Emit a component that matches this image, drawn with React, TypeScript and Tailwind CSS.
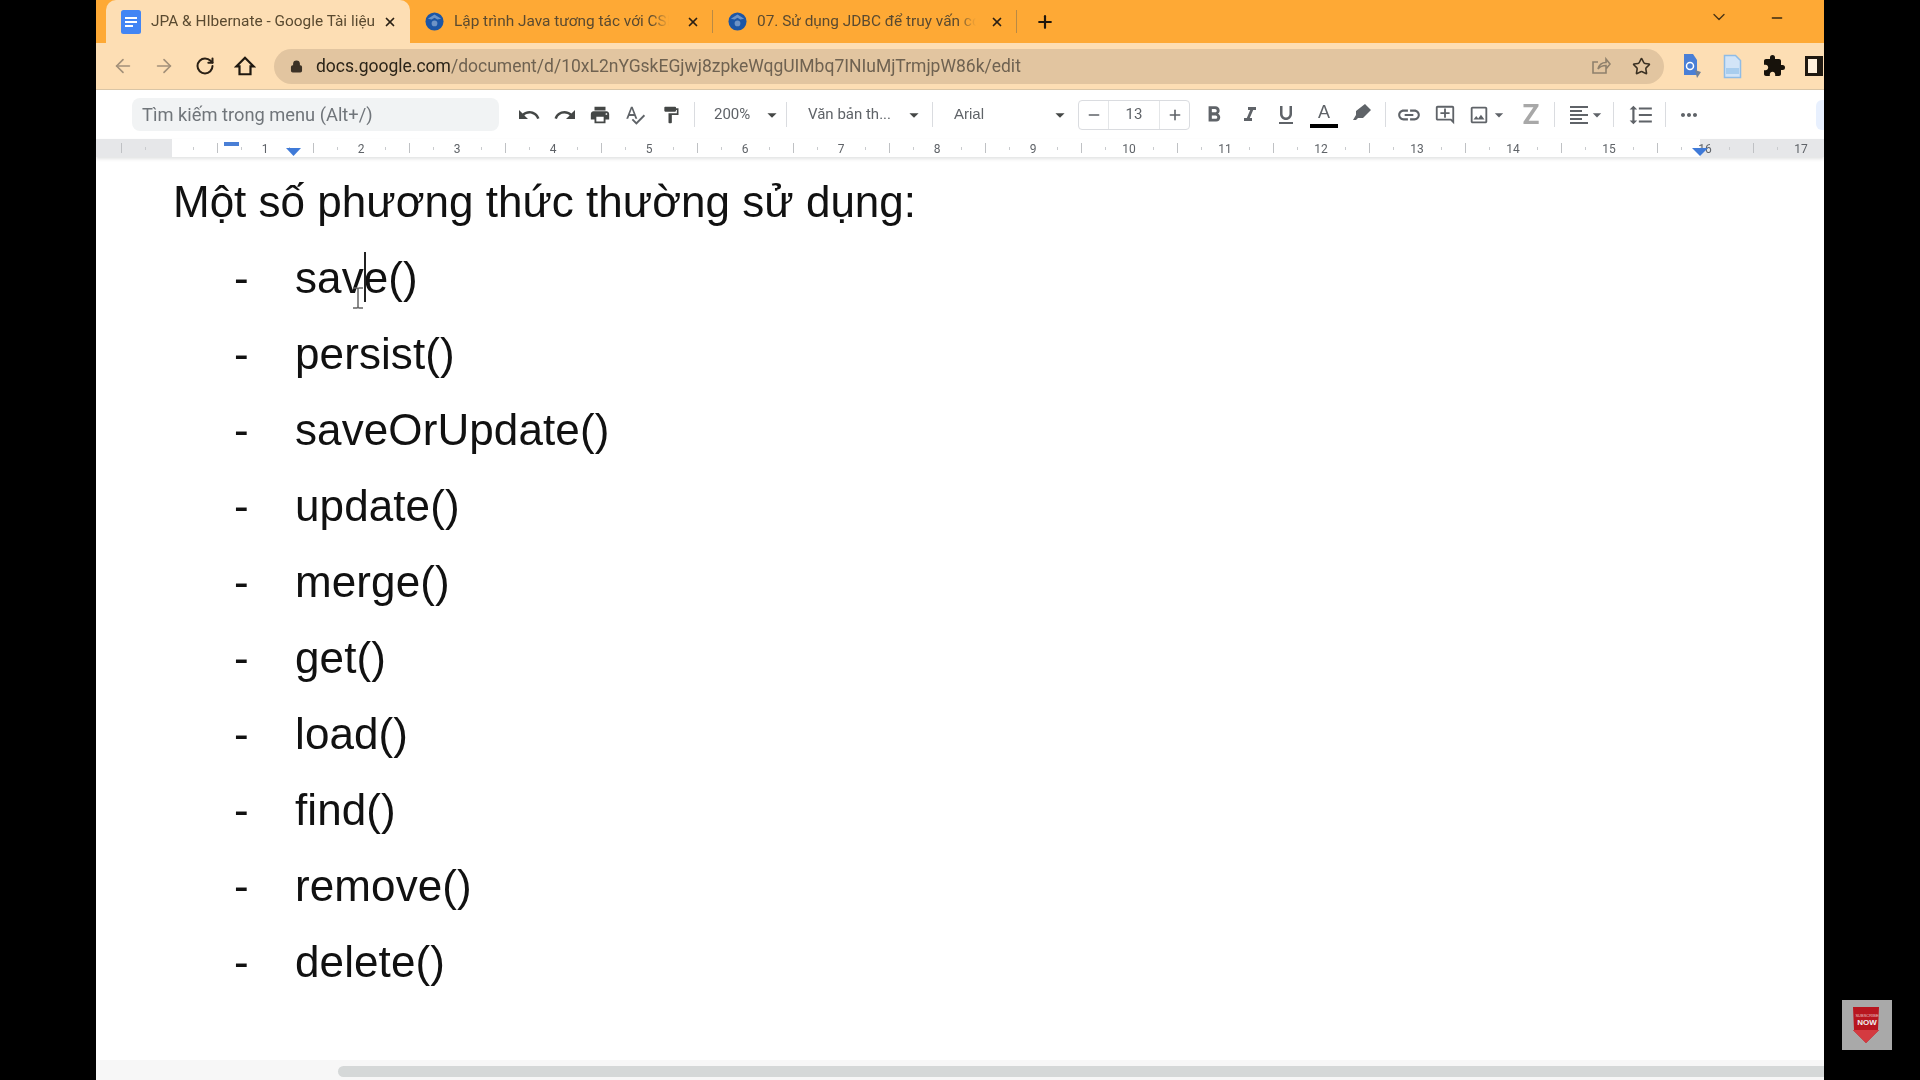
import React from 'react';
import { ArrowLeft, ArrowRight, RotateCw, Lock, Star, Plus, X, ChevronDown, Minus } from 'lucide-react';
import {
  MdUndo,
  MdRedo,
  MdPrint,
  MdSpellcheck,
  MdFormatPaint,
  MdArrowDropDown,
  MdFormatBold,
  MdFormatItalic,
  MdFormatUnderlined,
  MdLink,
  MdOutlineAddComment,
  MdOutlineImage,
  MdFormatAlignLeft,
  MdFormatLineSpacing,
  MdMoreHoriz,
  MdExtension,
} from 'react-icons/md';

const methods = ['persist()', 'saveOrUpdate()', 'update()', 'merge()', 'get()', 'load()', 'find()', 'remove()', 'delete()'];

const Globe = () => (
  <svg width="19" height="19" viewBox="0 0 20 20" className="shrink-0">
    <circle cx="10" cy="10" r="9.5" fill="#1c56a6" />
    <path d="M3 7 L10 2.5 L17 7 L13 8 L10 6 L7 8 Z" fill="#6d93c6" />
    <circle cx="10" cy="12" r="3" fill="#6d93c6" />
  </svg>
);

const DocsIcon = () => (
  <svg width="20" height="24" viewBox="0 0 20 24" className="shrink-0">
    <rect width="20" height="24" rx="2.5" fill="#4285f4" />
    <path d="M4 7h12v2H4zM4 11h12v2H4zM4 15h8v2H4z" fill="#fff" />
  </svg>
);

const Tab = ({ title, active, children, width, textWidth, sep }: { title: string; active?: boolean; children: React.ReactNode; width: string; textWidth: string; sep?: boolean }) => (
  <div className={`${width} h-[43px] flex items-center relative shrink-0 ${active ? 'bg-[#fddeb4] rounded-t-[10px]' : ''}`}>
    {children}
    <span className={`${textWidth} relative ml-[10px] text-[15.4px] text-[#5a4a30] whitespace-nowrap overflow-hidden shrink-0 font-['Roboto',sans-serif]`}>
      {title}
      {!active && <span className="absolute right-0 top-0 bottom-0 w-[18px] bg-gradient-to-r from-transparent to-[#fea935]" />}
    </span>
    <X size={14} strokeWidth={3} className="text-[#2a2015] ml-auto mr-[13px] shrink-0" />
    {sep && <div className="absolute right-0 top-[10px] w-px h-[23px] bg-[#b98a45]" />}
  </div>
);

const Sep = ({ className }: { className: string }) => <div className={`w-px h-[25px] bg-[#dadce0] shrink-0 ${className}`} />;

const Ruler = () => {
  const ticks = Array.from({ length: 72 }, (_, i) => i);
  return (
    <svg width="1728" height="18" className="block">
      <rect width="1728" height="18" fill="#ffffff" />
      <rect width="76" height="18" fill="#e6e7e9" />
      <rect x="1604" width="124" height="18" fill="#e6e7e9" />
      {ticks.map((i) => {
        const x = 25 + i * 24;
        if (i % 4 === 2) {
          return null;
        }
        if (i % 4 === 0) {
          return <rect key={i} x={x} y="4" width="1" height="10" fill="#bfc1c4" />;
        }
        return <rect key={i} x={x} y="8" width="1" height="3" fill="#c9cbce" />;
      })}
      {Array.from({ length: 17 }, (_, i) => (
        <text key={i} x={169 + i * 96} y="14" textAnchor="middle" fontSize="12" fontFamily="Roboto, sans-serif" fill="#5f6368">
          {i + 1}
        </text>
      ))}
      <rect x="128" y="3" width="15" height="4" fill="#4a7fd6" />
      <path d="M190 9h15l-7.5 8z" fill="#3f7ad8" />
      <path d="M1596 9h16l-8 8z" fill="#3f7ad8" />
    </svg>
  );
};

const Badge = () => (
  <div className="absolute left-[1842px] top-[1000px] w-[50px] h-[50px] bg-[#a9a9a9] flex flex-col items-center">
    <svg width="26" height="36" viewBox="0 0 26 36" className="absolute left-[11px] top-[7px]">
      <path d="M0 0h26l-1 23h1L13 36 0 23h1z" fill="#b8161f" />
      <path d="M0 23h26L13 36z" fill="#d43a40" />
    </svg>
    <span className="relative mt-[14px] text-[4px] leading-[4px] text-[#e8c8c8]">SUBSCRIBE</span>
    <span className="relative text-[8px] leading-[9px] font-bold text-[#eee]">NOW</span>
  </div>
);

export default function App() {
  return (
    <div className="w-[1920px] h-[1080px] bg-black relative overflow-hidden font-['Liberation_Sans',sans-serif]">
      <div className="ml-[96px] w-[1728px] h-[1080px] flex flex-col bg-white blur-[0.4px]">
        {/* tab strip */}
        <div className="h-[43px] bg-[#fea935] flex items-center pl-[10px] shrink-0 relative">
          <Tab title="JPA & HIbernate - Google Tài liệu" active width="w-[304px]" textWidth="w-[226px]">
            <div className="ml-[15px]"><DocsIcon /></div>
          </Tab>
          <Tab title="Lập trình Java tương tác với CSDL" width="w-[303px]" textWidth="w-[215px]" sep>
            <div className="ml-[15px]"><Globe /></div>
          </Tab>
          <Tab title="07. Sử dụng JDBC để truy vấn cơ" width="w-[304px]" textWidth="w-[219px]" sep>
            <div className="ml-[15px]"><Globe /></div>
          </Tab>
          <Plus size={20} strokeWidth={2.6} className="ml-[18px] text-[#20170c]" />
          <ChevronDown size={20} strokeWidth={1.6} className="absolute left-[1613px] top-[7px] text-[#4a3415]" />
          <Minus size={16} strokeWidth={2} className="absolute left-[1673px] top-[10px] text-[#3a2a10]" />
        </div>

        {/* address bar */}
        <div className="h-[47px] bg-[#fddeb4] flex items-center shrink-0 border-b border-[#d9c5a6] overflow-hidden">
          <ArrowLeft size={22} strokeWidth={1.8} className="ml-[16px] text-[#a39079] shrink-0" />
          <ArrowRight size={22} strokeWidth={1.8} className="ml-[19px] text-[#a39079] shrink-0" />
          <RotateCw size={20} strokeWidth={2.4} className="ml-[20px] text-[#2a2015] shrink-0" />
          <svg width="22" height="22" viewBox="0 0 24 24" className="ml-[19px] shrink-0" fill="none" stroke="#1f1810" strokeWidth="2.4">
            <path d="M12 3 2.5 12.5H6V21h12v-8.5h3.5z" strokeLinejoin="miter" />
          </svg>
          <div className="ml-[18px] w-[1390px] h-[35px] rounded-full bg-[#e2c5a0] flex items-center shrink-0">
            <Lock size={13} fill="#3c3226" strokeWidth={2.5} className="ml-[16px] text-[#3c3226]" />
            <span className="ml-[13px] text-[17.5px] whitespace-nowrap font-['Roboto',sans-serif]">
              <span className="text-[#2b2418]">docs.google.com</span>
              <span className="text-[#6f6251]">/document/d/10xL2nYGskEGjwj8zpkeWqgUIMbq7INIuMjTrmjpW86k/edit</span>
            </span>
            <svg width="20" height="20" viewBox="0 0 20 20" className="ml-auto mr-[21px]" fill="none" stroke="#8f806c" strokeWidth="1.6">
              <path d="M15 12v5H2V6h5M7 13c1-4 4-6.500 8-6.500V3l4 5-4 5V9.500c-3 0-6 1-8 3.500z" />
            </svg>
            <Star size={19} strokeWidth={2} className="mr-[13px] text-[#3a3022]" />
          </div>
          <svg width="19" height="25" viewBox="0 0 19 25" className="ml-[18px] shrink-0">
            <path d="M2 0h9l4 6v15H2z" fill="#4a7fd6" />
            <circle cx="8" cy="12" r="3.500" fill="none" stroke="#fff" strokeWidth="1.500" />
            <path d="M13 16l6 2-4 6z" fill="#6f7f96" />
          </svg>
          <svg width="19" height="25" viewBox="0 0 19 25" className="ml-[22px] shrink-0">
            <path d="M1.500 1.500h11l5 5v17h-16z" fill="#d2e4f7" stroke="#8fbce6" strokeWidth="1.500" />
            <rect x="3" y="14" width="13" height="6" fill="#a8cdee" />
          </svg>
          <MdExtension size={24} className="ml-[20px] text-[#17120b] shrink-0" />
          <div className="ml-[19px] w-[18px] h-[20px] border-[3px] border-[#1f1810] border-r-0 relative shrink-0 bg-[#fff0dc]">
            <div className="absolute right-0 -top-[3px] -bottom-[3px] w-[6px] bg-[#1f1810]" />
          </div>
        </div>

        {/* docs toolbar */}
        <div className="h-[49px] bg-white flex items-center shrink-0 text-[#444746]">
          <div className="ml-[36px] w-[367px] h-[33px] rounded-[8px] bg-[#f1f3f4] flex items-center pl-[10px] text-[18.3px] text-[#70757a] font-['Roboto',sans-serif]">
            Tìm kiếm trong menu (Alt+/)
          </div>
          <MdUndo size={24} className="ml-[18px]" />
          <MdRedo size={24} className="ml-[12px]" />
          <MdPrint size={22} className="ml-[12px]" />
          <MdSpellcheck size={22} className="ml-[13px] text-[#5f6368]" />
          <MdFormatPaint size={20} className="ml-[15px]" />
          <Sep className="ml-[13px]" />
          <span className="ml-[19px] w-[46px] text-[15px] font-['Roboto',sans-serif] text-[#5f6368]">200%</span>
          <MdArrowDropDown size={22} className="ml-[1px]" />
          <Sep className="ml-[3px]" />
          <span className="ml-[21px] w-[94px] text-[15px] whitespace-nowrap font-['Roboto',sans-serif] text-[#5f6368]">Văn bản th...</span>
          <MdArrowDropDown size={22} className="ml-[1px]" />
          <Sep className="ml-[7px]" />
          <span className="ml-[21px] w-[94px] text-[15px] text-[#5f6368]">Arial</span>
          <MdArrowDropDown size={22} className="ml-[1px]" />
          <div className="ml-[7px] w-[112px] h-[30px] border border-[#dadce0] rounded-[4px] flex items-center text-[#5f6368]">
            <div className="w-[30px] h-full flex items-center justify-center border-r border-[#e4e6e8]"><Minus size={16} strokeWidth={2.400} /></div>
            <div className="flex-1 text-center text-[15px] font-['Roboto',sans-serif]">13</div>
            <div className="w-[30px] h-full flex items-center justify-center border-l border-[#e4e6e8]"><Plus size={16} strokeWidth={2.400} /></div>
          </div>
          <MdFormatBold size={26} className="ml-[11px] text-[#5f6368]" />
          <MdFormatItalic size={24} className="ml-[11px] text-[#5f6368]" />
          <MdFormatUnderlined size={24} className="ml-[12px] text-[#5f6368]" />
          <div className="ml-[12px] w-[28px] flex flex-col items-center">
            <span className="text-[18px] leading-[20px] text-[#5f6368]">A</span>
            <div className="w-[28px] h-[4px] bg-black mt-[2px]" />
          </div>
          <svg width="20" height="20" viewBox="0 0 20 20" className="ml-[14px] -mt-[4px]" fill="#5f6368">
            <path d="M13 1 19 7 11 15H6L4 17H1L4 12V8z" />
          </svg>
          <Sep className="ml-[13px]" />
          <MdLink size={26} className="ml-[10px] text-[#5f6368]" />
          <MdOutlineAddComment size={22} className="ml-[12px] text-[#5f6368]" />
          <MdOutlineImage size={22} className="ml-[12px] text-[#5f6368]" />
          <MdArrowDropDown size={20} className="-ml-[1px] text-[#5f6368]" />
          <span className="ml-[11px] w-[22px] text-center text-[28px] leading-none font-bold text-[#a8a8a8] font-['Roboto',sans-serif]">Z</span>
          <Sep className="ml-[12px]" />
          <MdFormatAlignLeft size={24} className="ml-[12px] text-[#5f6368]" />
          <MdArrowDropDown size={20} className="-ml-[4px] text-[#5f6368]" />
          <Sep className="ml-[6px]" />
          <MdFormatLineSpacing size={26} className="ml-[14px] text-[#5f6368]" />
          <Sep className="ml-[11px]" />
          <MdMoreHoriz size={24} className="ml-[11px] text-[#5f6368]" />
          <div className="ml-auto w-[8px] h-[30px] bg-[#e8f0fe] rounded-l-[6px]" />
        </div>

        <div className="h-[18px] shrink-0 shadow-[0_2px_3px_rgba(60,64,67,0.15)] relative"><Ruler /></div>

        {/* page text */}
        <div className="flex-1 pt-[7px] text-[44px] leading-[76px] text-[#111] relative">
          <div className="pl-[77px]">Một số phương thức thường sử dụng:</div>
          <div className="pl-[138px] flex">
            <span className="w-[61px]">-</span>
            <span className="tracking-[0.1px]">
              sav
              <span className="relative inline-block w-0 h-0">
                <span className="absolute left-0 -top-[41px] w-[2px] h-[50px] bg-[#222]" />
                <svg width="14" height="22" viewBox="0 0 14 22" className="absolute -left-[13px] top-[-6px]" fill="none" stroke="#666" strokeWidth="1.500">
                  <path d="M2 1h4l1 1 1-1h4M7 2v18M2 21h4l1-1 1 1h4" />
                </svg>
              </span>
              e()
            </span>
          </div>
          {methods.map((m) => (
            <div key={m} className="pl-[138px] flex">
              <span className="w-[61px]">-</span>
              <span className="tracking-[0.1px]">{m}</span>
            </div>
          ))}
        </div>

        {/* scrollbar */}
        <div className="h-[20px] shrink-0 bg-[#f7f7f7] pl-[242px] pt-[6px]">
          <div className="h-[11px] bg-[#d5d8d8] rounded-l-full" />
        </div>
      </div>
      <Badge />
    </div>
  );
}
